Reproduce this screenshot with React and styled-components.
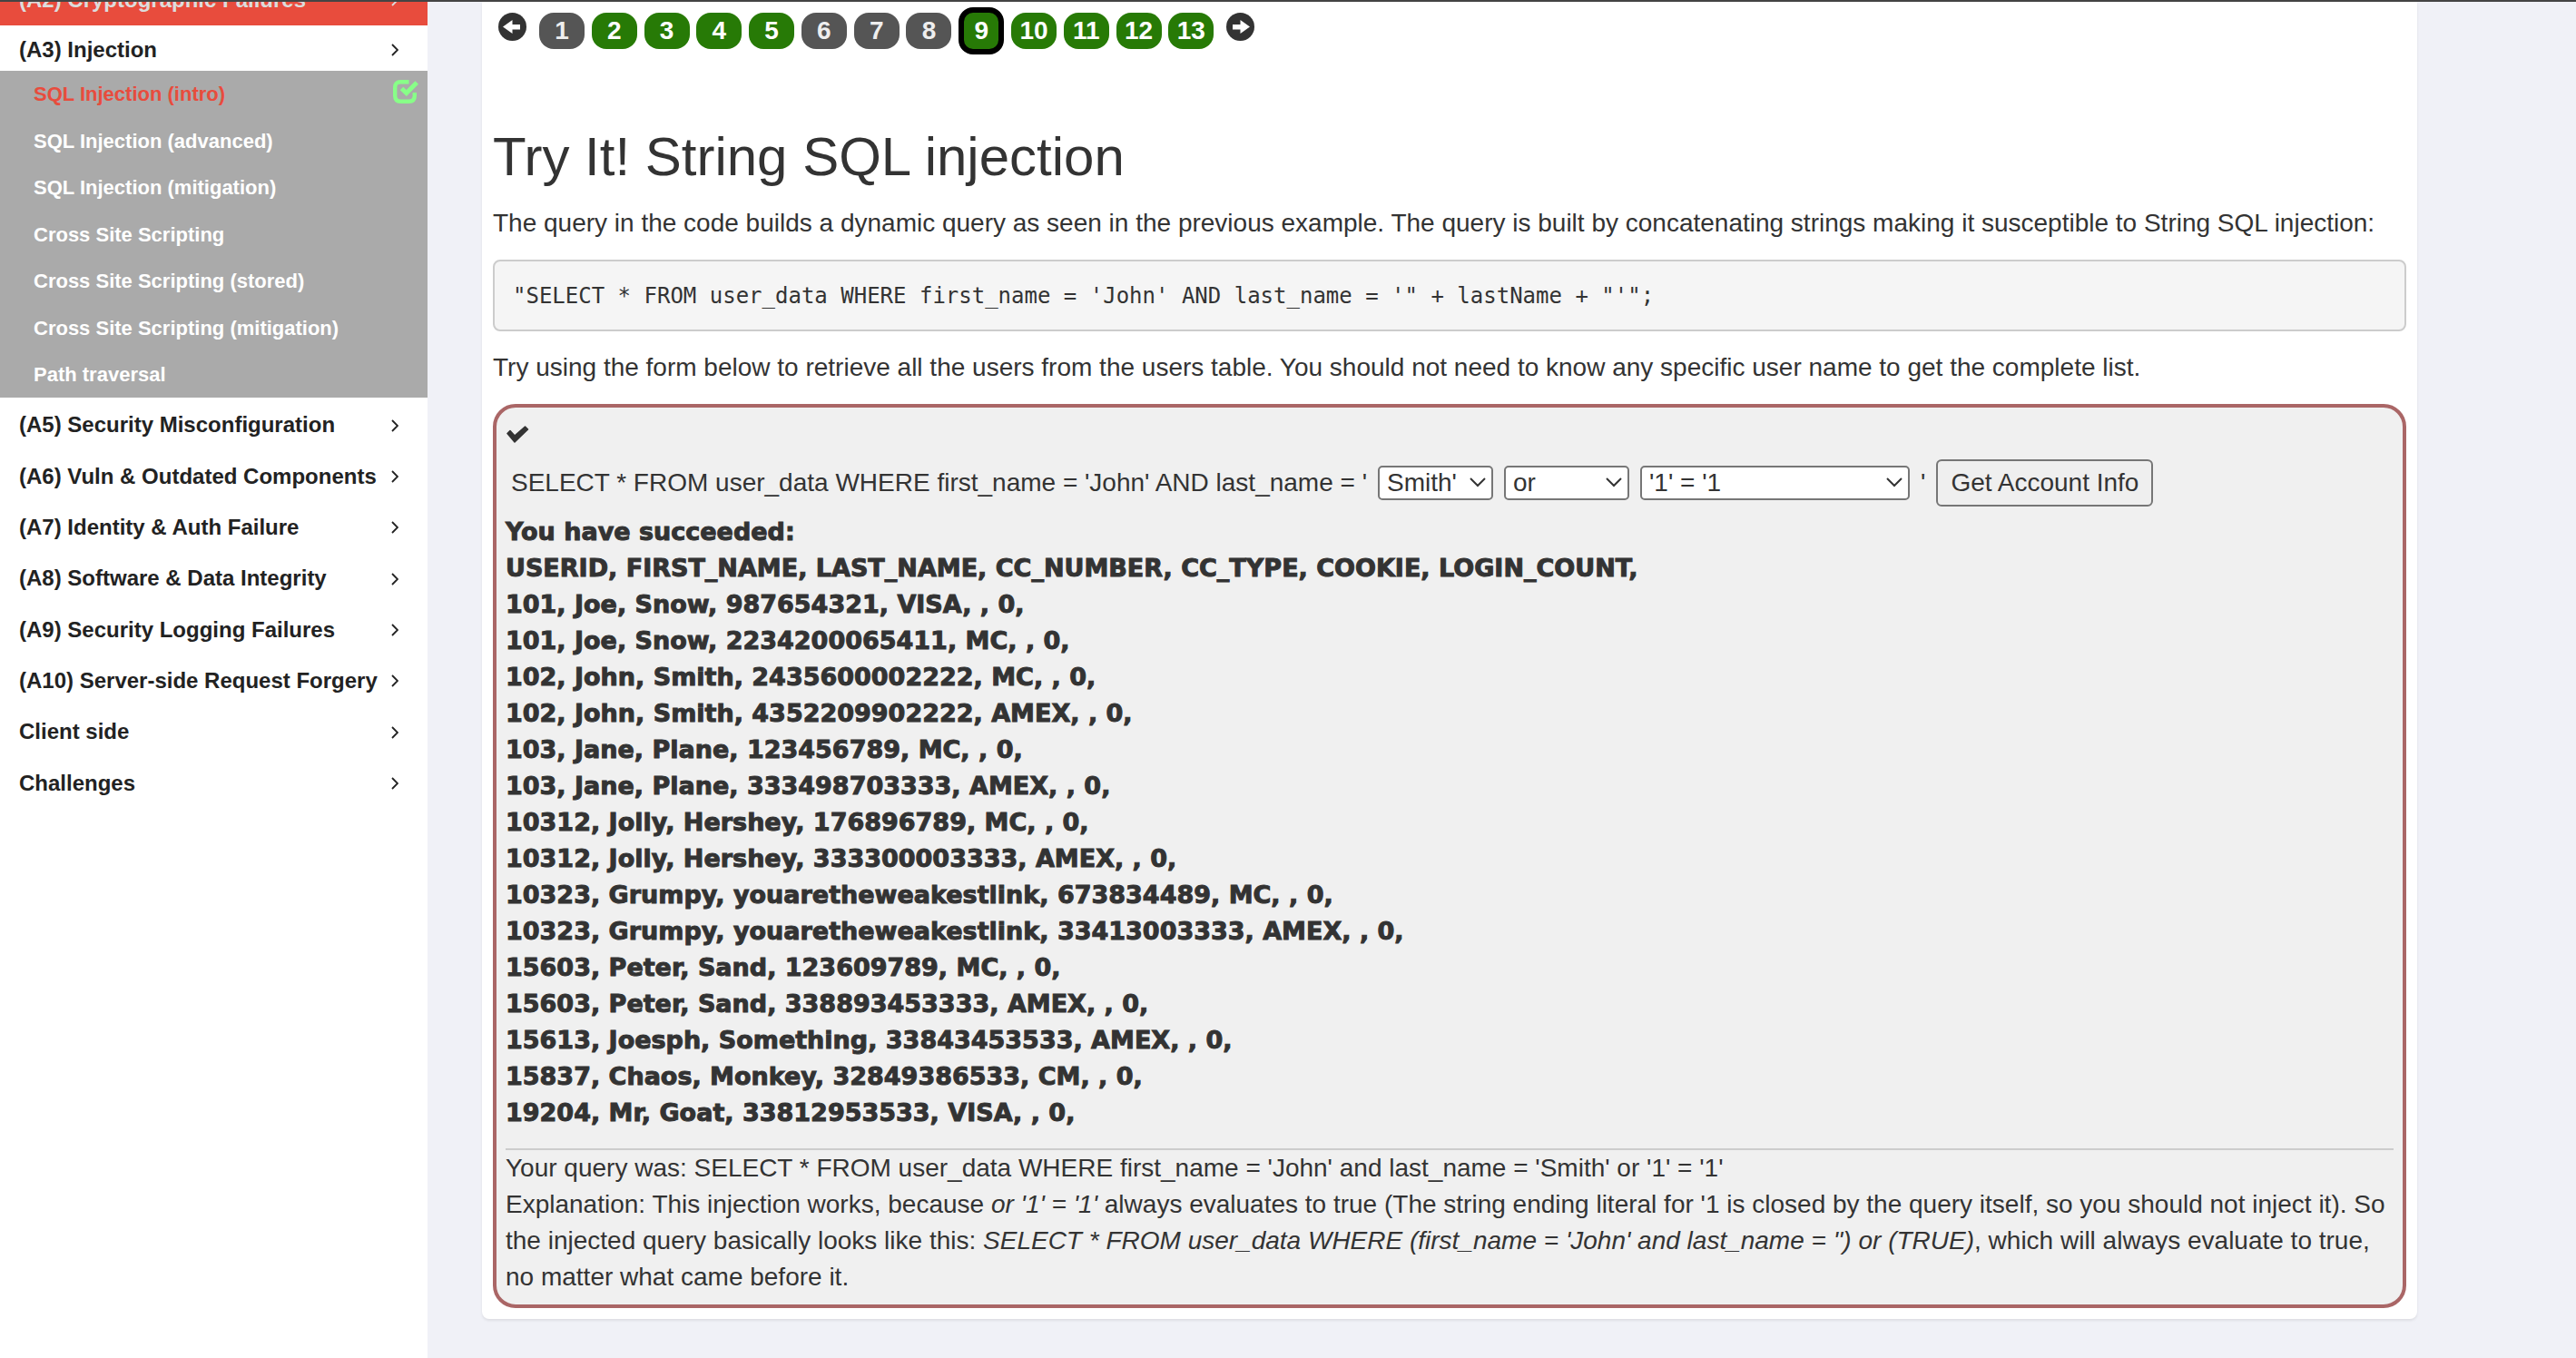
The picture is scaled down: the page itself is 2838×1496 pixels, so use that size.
import React from 'react';
import styled, { createGlobalStyle } from 'styled-components';

const Global = createGlobalStyle`
  *, *::before, *::after { box-sizing: border-box; }
  body {
    margin: 0;
    background: #f0f1f7;
    color: #333;
    font: 28px/40px "Liberation Sans", Arial, sans-serif;
  }
`;

const Page = styled.div`
  display: flex;
  align-items: stretch;
  min-height: 100vh;
  border-top: 2px solid #444;
`;

const Sidebar = styled.nav`
  flex: 0 0 471px;
  background: #fff;
  overflow: hidden;
`;

const CategoryList = styled.ul`
  list-style: none;
  margin: 0;
  padding: 2px 0 0;
`;

const Clip = styled.div`
  display: flex;
  align-items: flex-end;
  height: 26px;
  overflow: hidden;
  background: #e84c3d;
`;

const CategoryLink = styled.a`
  display: flex;
  flex: 1;
  align-items: center;
  justify-content: space-between;
  padding: ${(p) => (p.$open ? '10px 32px 6px 21px' : '11px 32px 11px 21px')};
  color: ${(p) => (p.$active ? '#dcdcdc' : '#222')};
  font-size: 24px;
  font-weight: 700;
  line-height: 1.43;
  text-decoration: none;
`;

const LessonList = styled.ul`
  list-style: none;
  margin: 0;
  padding: 0 10px 0 37px;
  background: #aaa;
`;

const LessonItem = styled.li`
  display: flex;
  justify-content: space-between;
  align-items: flex-start;
  padding: 10px 0;
  font-size: 22px;
  line-height: 1.43;
`;

const LessonLink = styled.a`
  color: ${(p) => (p.$current ? '#e84c3d' : '#fff')};
  font-weight: 700;
  text-decoration: none;
`;

const Main = styled.main`
  flex: 1;
  padding: 0 175px 44px 60px;
`;

const Card = styled.section`
  padding: 6px 12px 12px;
  background: #fff;
  border-radius: 0 0 8px 8px;
  box-shadow: 0 2px 3px rgba(0, 0, 0, 0.08);
`;

const Pager = styled.nav`
  display: flex;
  align-items: flex-start;
  gap: 14px;
  padding-left: 6px;
`;

const ArrowButton = styled.button`
  display: flex;
  margin: 6px 0 0;
  padding: 0;
  border: 0;
  background: none;
`;

const PageList = styled.ol`
  list-style: none;
  margin: 0;
  padding: 0;
  line-height: 0;
  li { display: inline; }
`;

const PageLink = styled.a`
  display: inline-flex;
  align-items: center;
  justify-content: center;
  vertical-align: middle;
  width: 50px;
  height: ${(p) => (p.$current ? 52 : 40)}px;
  border: ${(p) => (p.$current ? '6px solid #000' : '0')};
  border-radius: 16px;
  background: ${(p) => (p.$solved ? '#277a06' : '#555')};
  color: ${(p) => (p.$solved ? '#fff' : '#eee')};
  font-weight: 700;
  line-height: 40px;
  text-decoration: none;
`;

const Title = styled.h1`
  margin: 80px 0 20px;
  font-size: 60px;
  font-weight: 400;
  line-height: 66px;
`;

const Text = styled.p`
  margin: 0 0 20px;
`;

const Code = styled.pre`
  margin: 0 0 20px;
  padding: 21px 20px 19px;
  border: 2px solid #ccc;
  border-radius: 8px;
  background: #f5f5f5;
  font: 24px/35px "DejaVu Sans Mono", monospace;
`;

const Attack = styled.div`
  padding: 11px 10px 10px;
  border: 4px solid #a66;
  border-radius: 25px;
  background: #f0f0f0;
`;

const QueryForm = styled.form`
  display: flex;
  align-items: center;
  gap: 12px;
  padding: 6px;
`;

const SelectBox = styled.span`
  display: flex;
  align-items: center;
  justify-content: flex-end;
  width: ${(p) => p.$width}px;
  height: 38px;
  border: 2px solid #767676;
  border-radius: 5px;
  background: #fff;
  svg { flex: none; margin: 0 6px 0 -28px; pointer-events: none; }
`;

const Select = styled.select`
  appearance: none;
  flex: 1;
  min-width: 0;
  height: 34px;
  padding: 0 0 0 8px;
  border: 0;
  background: transparent;
  color: #333;
  font: inherit;
  line-height: 34px;
`;

const Submit = styled.button`
  height: 52px;
  padding: 0 14px;
  border: 2px solid #767676;
  border-radius: 6px;
  background: #efefef;
  color: #333;
  font: inherit;
`;

const Results = styled.div`
  margin-top: 2px;
  font-family: "DejaVu Sans", sans-serif;
  font-size: 27px;
  font-weight: 900;
  -webkit-text-stroke: 1px #333;
`;

const Output = styled.div`
  margin-top: 19px;
  border-top: 2px solid #ccc;
`;

const Chevron = () => (
  <svg width="8" height="14" viewBox="0 0 8 14" fill="none" stroke="currentColor" strokeWidth="1.8" aria-hidden="true">
    <path d="M1 1l6 6-6 6" />
  </svg>
);

const Caret = () => (
  <svg width="18" height="12" viewBox="0 0 18 12" fill="none" stroke="#333" strokeWidth="2" aria-hidden="true">
    <path d="M1 1l8 8 8-8" />
  </svg>
);

const SolvedIcon = () => (
  <svg width="28" height="28" viewBox="0 0 28 28" fill="none" stroke="#8f8" aria-hidden="true">
    <path d="M17.5 2.2H8.5Q2.2 2.2 2.2 8.5v9Q2.2 23.8 8.5 23.8h9Q23.8 23.8 23.8 17.5V14" strokeWidth="4.4" />
    <path d="M9.5 9.5l5.3 5L26.2 3" strokeWidth="5" />
  </svg>
);

const CheckIcon = () => (
  <svg width="26" height="20" viewBox="-1 0 26 20" aria-hidden="true" fill="#333">
    <path d="M1 8.5L4 5.5 9 11 20.5 1 23.5 4 9 18z" stroke="#333" strokeWidth="1.5" strokeLinejoin="round" />
  </svg>
);

const ArrowIcon = ({ back }) => (
  <svg width="31" height="31" viewBox="0 0 31 31" aria-hidden="true">
    <circle cx="15.5" cy="15.5" r="15.5" fill="#333" />
    <path
      d={back ? 'M5 15.5L15.5 8v5H24v5.500h-8.500V23z' : 'M26 15.5L15.5 8v5H7v5.500h8.500V23z'}
      fill="#fff"
    />
  </svg>
);

const lessons = [
  'SQL Injection (intro)',
  'SQL Injection (advanced)',
  'SQL Injection (mitigation)',
  'Cross Site Scripting',
  'Cross Site Scripting (stored)',
  'Cross Site Scripting (mitigation)',
  'Path traversal',
];

const categories = [
  '(A5) Security Misconfiguration',
  '(A6) Vuln & Outdated Components',
  '(A7) Identity & Auth Failure',
  '(A8) Software & Data Integrity',
  '(A9) Security Logging Failures',
  '(A10) Server-side Request Forgery',
  'Client side',
  'Challenges',
];

const unsolved = [1, 6, 7, 8];
const pages = Array.from({ length: 13 }, (_, i) => i + 1);

const rows = [
  'USERID, FIRST_NAME, LAST_NAME, CC_NUMBER, CC_TYPE, COOKIE, LOGIN_COUNT,',
  '101, Joe, Snow, 987654321, VISA, , 0,',
  '101, Joe, Snow, 2234200065411, MC, , 0,',
  '102, John, Smith, 2435600002222, MC, , 0,',
  '102, John, Smith, 4352209902222, AMEX, , 0,',
  '103, Jane, Plane, 123456789, MC, , 0,',
  '103, Jane, Plane, 333498703333, AMEX, , 0,',
  '10312, Jolly, Hershey, 176896789, MC, , 0,',
  '10312, Jolly, Hershey, 333300003333, AMEX, , 0,',
  '10323, Grumpy, youaretheweakestlink, 673834489, MC, , 0,',
  '10323, Grumpy, youaretheweakestlink, 33413003333, AMEX, , 0,',
  '15603, Peter, Sand, 123609789, MC, , 0,',
  '15603, Peter, Sand, 338893453333, AMEX, , 0,',
  '15613, Joesph, Something, 33843453533, AMEX, , 0,',
  '15837, Chaos, Monkey, 32849386533, CM, , 0,',
  '19204, Mr, Goat, 33812953533, VISA, , 0,',
];

const Category = ({ name, active, open }) => (
  <CategoryLink href="#" $active={active} $open={open}>
    <span>{name}</span>
    <Chevron />
  </CategoryLink>
);

const Choice = ({ label, width, options }) => (
  <SelectBox $width={width}>
    <Select aria-label={label}>
      {options.map((o) => <option key={o}>{o}</option>)}
    </Select>
    <Caret />
  </SelectBox>
);

export default function App() {
  return (
    <>
      <Global />
      <Page>
        <Sidebar aria-label="Lessons">
          <Clip><Category name="(A2) Cryptographic Failures" active /></Clip>
          <Category name="(A3) Injection" open />
          <LessonList>
            {lessons.map((name, i) => (
              <LessonItem key={name}>
                <LessonLink href="#" $current={i === 0}>{name}</LessonLink>
                {i === 0 && <SolvedIcon />}
              </LessonItem>
            ))}
          </LessonList>
          <CategoryList>
            {categories.map((name) => (
              <li key={name}><Category name={name} /></li>
            ))}
          </CategoryList>
        </Sidebar>
        <Main>
          <Card>
            <Pager aria-label="Lesson pages">
              <ArrowButton aria-label="Previous page"><ArrowIcon back /></ArrowButton>
              <PageList>
                {pages.map((n) => (
                  <React.Fragment key={n}>
                    <li>
                      <PageLink href="#" $solved={!unsolved.includes(n)} $current={n === 9}>{n}</PageLink>
                    </li>{' '}
                  </React.Fragment>
                ))}
              </PageList>
              <ArrowButton aria-label="Next page"><ArrowIcon /></ArrowButton>
            </Pager>
            <Title>Try It! String SQL injection</Title>
            <Text>
              The query in the code builds a dynamic query as seen in the previous example. The query is built by
              concatenating strings making it susceptible to String SQL injection:
            </Text>
            <Code>{`"SELECT * FROM user_data WHERE first_name = 'John' AND last_name = '" + lastName + "'";`}</Code>
            <Text>
              Try using the form below to retrieve all the users from the users table. You should not need to know any
              specific user name to get the complete list.
            </Text>
            <Attack>
              <CheckIcon />
              <QueryForm onSubmit={(e) => e.preventDefault()}>
                <span>SELECT * FROM user_data WHERE first_name = 'John' AND last_name = '</span>
                <Choice label="Account" width={127} options={["Smith'", 'Smith']} />
                <Choice label="Operator" width={138} options={['or', 'and']} />
                <Choice label="Injection" width={297} options={["'1' = '1", "1 = 1"]} />
                <span>'</span>
                <Submit type="submit">Get Account Info</Submit>
              </QueryForm>
              <Results>
                <div>You have succeeded:</div>
                {rows.map((row) => <div key={row}>{row}</div>)}
              </Results>
              <Output>
                Your query was: SELECT * FROM user_data WHERE first_name = 'John' and last_name = 'Smith' or '1' = '1'
                <br />
                Explanation: This injection works, because <em>or '1' = '1'</em> always evaluates to true (The string
                ending literal for '1 is closed by the query itself, so you should not inject it). So the injected query
                basically looks like this:{' '}
                <em>SELECT * FROM user_data WHERE (first_name = 'John' and last_name = '') or (TRUE)</em>, which will
                always evaluate to true, no matter what came before it.
              </Output>
            </Attack>
          </Card>
        </Main>
      </Page>
    </>
  );
}
